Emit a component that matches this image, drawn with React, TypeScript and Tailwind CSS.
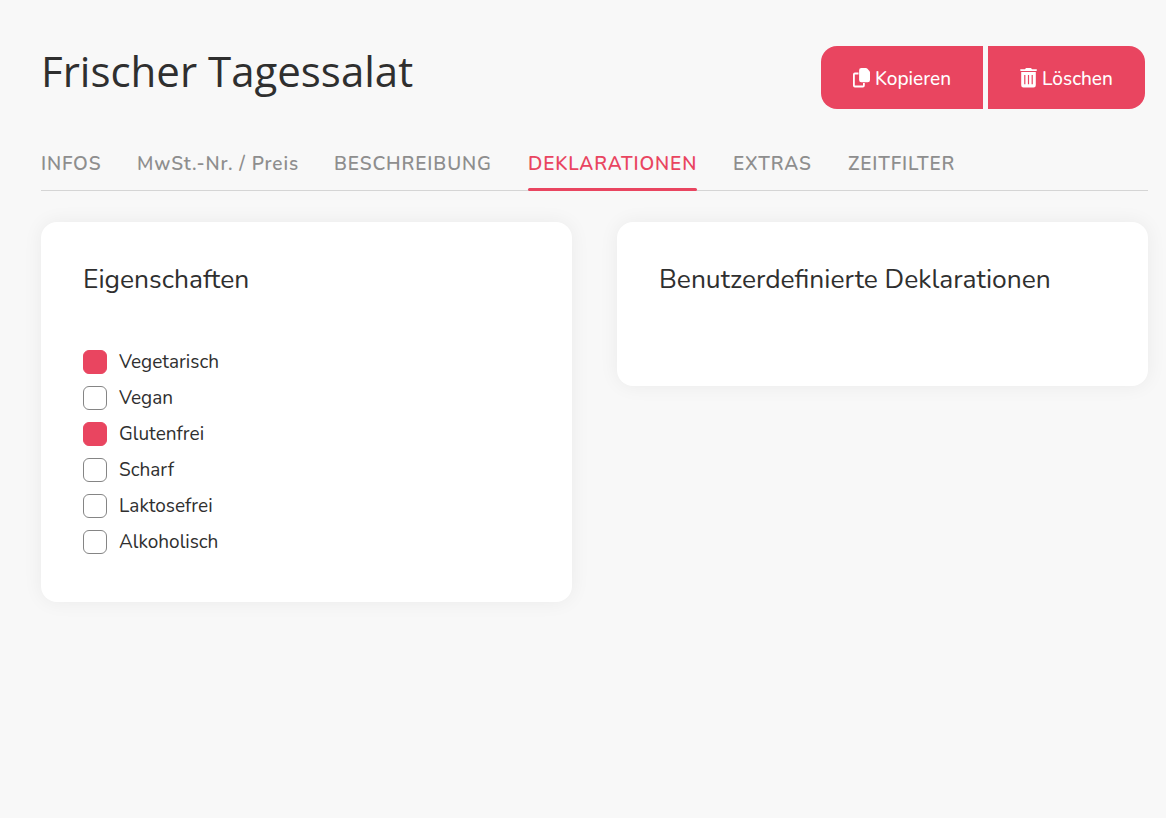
import { useState } from 'react'
import clsx from 'clsx'

const TABS = [
  { label: 'INFOS', width: 'w-[60px]' },
  { label: 'MwSt.-Nr. / Preis', width: 'w-[161px]' },
  { label: 'BESCHREIBUNG', width: 'w-[158px]' },
  { label: 'DEKLARATIONEN', width: 'w-[169px]' },
  { label: 'EXTRAS', width: 'w-[79px]' },
  { label: 'ZEITFILTER', width: 'w-[108px]' },
]

const PROPERTIES = ['Vegetarisch', 'Vegan', 'Glutenfrei', 'Scharf', 'Laktosefrei', 'Alkoholisch']

function CopyIcon() {
  return (
    <svg width="17" height="20" viewBox="0 0 17 20" className="shrink-0">
      <path
        d="M5.5 5.5H1.9a1 1 0 0 0-1 1v11a1 1 0 0 0 1 1h8a1 1 0 0 0 1-1V15"
        fill="none"
        stroke="currentColor"
        strokeWidth="1.8"
      />
      <path
        d="M8.4 0h4.5c.5 0 1 .2 1.3.6l2.2 2.4c.4.4.6.9.6 1.4v7.5a2.3 2.3 0 0 1-2.3 2.3H8.4a2.3 2.3 0 0 1-2.3-2.3V2.3A2.3 2.3 0 0 1 8.4 0z"
        fill="currentColor"
      />
    </svg>
  )
}

function TrashIcon() {
  return (
    <svg width="17" height="20" viewBox="0 0 17 20" className="shrink-0">
      <path
        d="M6 0h5l1 1.2h4c.6 0 1 .4 1 .9s-.4.9-1 .9H1c-.6 0-1-.4-1-.9s.4-.9 1-.9h4z"
        fill="currentColor"
      />
      <path
        fillRule="evenodd"
        d="M1.2 4h14.6v13.2a2.2 2.2 0 0 1-2.2 2.2H3.4a2.2 2.2 0 0 1-2.2-2.2zM4.2 7v9.2h1.2V7zM7.9 7v9.2h1.2V7zM11.6 7v9.2h1.2V7z"
        fill="currentColor"
      />
    </svg>
  )
}

export default function App() {
  const [tab, setTab] = useState('DEKLARATIONEN')
  const [checked, setChecked] = useState(['Vegetarisch', 'Glutenfrei'])

  function toggle(name: string) {
    setChecked(checked.includes(name) ? checked.filter(c => c !== name) : [...checked, name])
  }

  return (
    <div className="min-h-screen bg-[#f8f8f8] pl-[41px] pr-[18px] pt-[46px] font-['Nunito','Lato',sans-serif] text-[#2f2f2f]">
      {/* Title + actions */}
      <header className="flex h-[63px] items-start justify-between pr-[3px]">
        <h1 className="whitespace-nowrap font-['Open_Sans','Noto_Sans',sans-serif] text-[42px] leading-[50px]">
          Frischer Tagessalat
        </h1>
        <div className="flex h-full gap-[5px] text-[19px] font-medium text-white">
          <button className="flex w-[162px] items-center rounded-l-[16px] bg-[#e94560] pl-8">
            <CopyIcon />
            <span className="ml-[5px] pt-[3px]">Kopieren</span>
          </button>
          <button className="flex w-[157px] items-center rounded-r-[16px] bg-[#e94560] pl-8">
            <TrashIcon />
            <span className="ml-[5px] pt-[3px]">Löschen</span>
          </button>
        </div>
      </header>

      {/* Tabs */}
      <nav className="mt-[35px] flex h-[47px] gap-9 border-b border-[#d5d5d5]">
        {TABS.map(({ label, width }) => (
          <button
            key={label}
            onClick={() => setTab(label)}
            className={clsx(
              'relative flex h-[47px] shrink-0 items-start whitespace-nowrap pt-[6px] text-[19px] font-semibold leading-[28px] tracking-[0.87px]',
              width,
              tab === label ? 'text-[#e94560]' : 'text-[#8e8e8e]',
            )}
          >
            {label}
            {tab === label && (
              <span className="absolute inset-x-0 bottom-0 h-[3px] rounded-full bg-[#e94560]" />
            )}
          </button>
        ))}
      </nav>

      {/* Cards */}
      <main className="mt-[31px] grid grid-cols-2 items-start gap-[45px]">
        <section className="h-[380px] rounded-[16px] bg-white px-[42px] pt-[39px] shadow-[0_0_20px_rgba(0,0,0,0.06)]">
          <h2 className="text-[26.4px] leading-9">Eigenschaften</h2>
          <div className="mt-[53px] flex flex-col gap-3">
            {PROPERTIES.map(name => (
              <label key={name} className="flex h-6 items-center gap-3 text-[19px] leading-6">
                <input
                  type="checkbox"
                  checked={checked.includes(name)}
                  onChange={() => toggle(name)}
                  className="size-6 shrink-0 appearance-none rounded-[6px] border border-[#858585] bg-white checked:border-[#e94560] checked:bg-[#e94560]"
                />
                <span>{name}</span>
              </label>
            ))}
          </div>
        </section>
        <section className="h-[164px] rounded-[16px] bg-white px-[42px] pt-[39px] shadow-[0_0_20px_rgba(0,0,0,0.06)]">
          <h2 className="whitespace-nowrap text-[26.4px] leading-9">Benutzerdefinierte Deklarationen</h2>
        </section>
      </main>
    </div>
  )
}
